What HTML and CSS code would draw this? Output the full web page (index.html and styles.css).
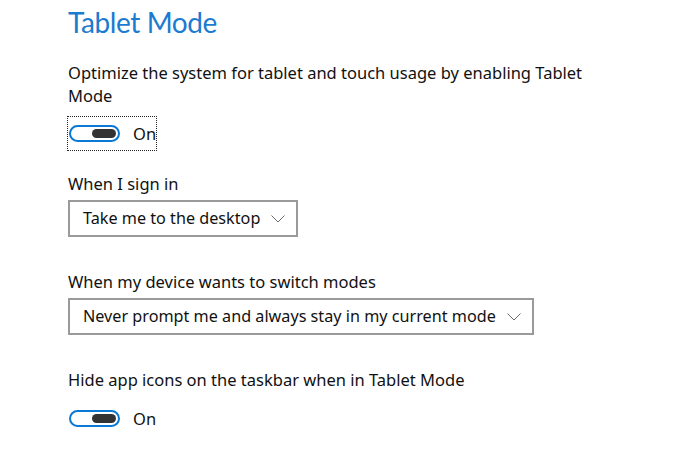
FILE: index.html
```html
<!DOCTYPE html>
<html lang="en">
<head>
<meta charset="utf-8">
<title>Tablet Mode</title>
<link rel="stylesheet" href="styles.css">
</head>
<body>
<main class="page">
  <h1 class="title">Tablet Mode</h1>
  <p class="desc">Optimize the system for tablet and touch usage by enabling Tablet Mode</p>
  <div class="toggle focused">
    <span class="switch"><span class="knob"></span></span>
    <span class="state">On</span>
  </div>

  <div class="label first">When I sign in</div>
  <div class="select">
    <span class="select-text">Take me to the desktop</span>
    <svg class="chevron" width="14" height="8" viewBox="0 0 14 8"><polyline points="0.5,0.5 7,7 13.5,0.5" fill="none" stroke="#6b6b6b" stroke-width="1"/></svg>
  </div>

  <div class="label">When my device wants to switch modes</div>
  <div class="select">
    <span class="select-text">Never prompt me and always stay in my current mode</span>
    <svg class="chevron" width="14" height="8" viewBox="0 0 14 8"><polyline points="0.5,0.5 7,7 13.5,0.5" fill="none" stroke="#6b6b6b" stroke-width="1"/></svg>
  </div>

  <div class="label">Hide app icons on the taskbar when in Tablet Mode</div>
  <div class="toggle second">
    <span class="switch"><span class="knob"></span></span>
    <span class="state">On</span>
  </div>
</main>
</body>
</html>
```

FILE: styles.css
```css
html, body {
  margin: 0;
  padding: 0;
  background: #ffffff;
}
body {
  font-family: "Noto Sans", "Open Sans", sans-serif;
  color: #111111;
}
.page {
  padding: 4px 0 0 68px;
  width: 560px;
}
.title {
  margin: 0;
  font-family: "Lato", "Noto Sans", sans-serif;
  font-size: 28px;
  line-height: 36px;
  font-weight: 400;
  letter-spacing: -0.4px;
  color: #1b7bd0;
}
.desc {
  margin: 21px 0 0 0;
  max-width: 520px;
  font-size: 16.5px;
  line-height: 23px;
}
.toggle {
  display: inline-flex;
  align-items: center;
  gap: 13px;
  height: 33px;
  margin-left: -1px;
  border: 1px solid transparent;
}
.toggle.focused {
  margin-top: 9px;
  border: 1px dotted #222;
}
.toggle.second {
  margin-top: 10px;
}
.switch {
  box-sizing: border-box;
  width: 51px;
  height: 17px;
  margin-left: 1px;
  border: 2px solid #0a78d4;
  border-radius: 9px;
  display: flex;
  align-items: center;
  justify-content: flex-end;
  padding-right: 2px;
}
.knob {
  width: 24px;
  height: 9px;
  border-radius: 5px;
  background: #333333;
}
.state {
  font-size: 16.5px;
  line-height: 23px;
}
.label {
  font-size: 16.5px;
  line-height: 23px;
  margin-top: 33px;
}
.label.first {
  margin-top: 21px;
}
.select {
  box-sizing: border-box;
  display: flex;
  width: fit-content;
  align-items: center;
  gap: 11px;
  height: 37px;
  margin-top: 5px;
  padding: 0 11px 0 13px;
  border: 2px solid #9a9a9a;
  font-size: 16.2px;
}
.select-text {
  line-height: 23px;
}
.chevron {
  display: block;
}
```
